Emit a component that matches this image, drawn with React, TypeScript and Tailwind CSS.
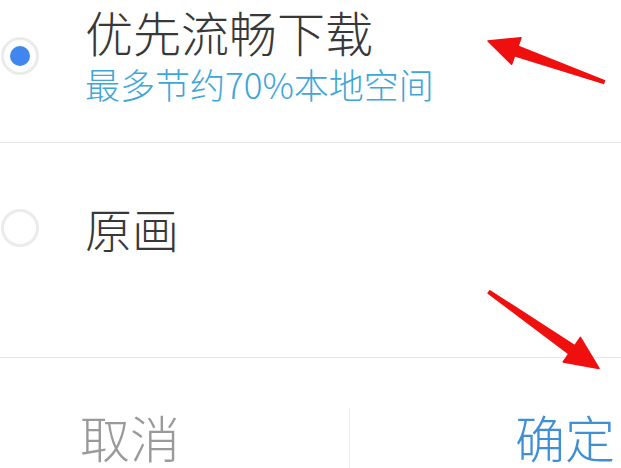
import React from 'react';

const font = { fontFamily: '"Noto Sans CJK SC", "Noto Sans", sans-serif' };

function Radio({ checked }: { checked?: boolean }) {
  return (
    <div className="w-[38px] h-[38px] shrink-0 rounded-full border-[3px] border-[#ebebeb] flex items-center justify-center">
      {checked && <div className="w-[20px] h-[20px] rounded-full bg-[#3f86ef]" />}
    </div>
  );
}

function Arrows() {
  return (
    <svg className="absolute inset-0 pointer-events-none" width="621" height="468" viewBox="0 0 621 468">
      <polygon
        points="488,41 521,37.8 518,46.3 604.5,80.6 603.5,83.4 514.6,55.7 511.6,64.2"
        fill="#f00f0f"
        stroke="#f00f0f"
        strokeWidth="1.5"
        strokeLinejoin="round"
      />
      <polygon
        points="599,368.5 580.4,337.4 574.7,345.6 489.9,290.8 488.1,293.2 568.9,353.8 563.2,362"
        fill="#f00f0f"
        stroke="#f00f0f"
        strokeWidth="1.5"
        strokeLinejoin="round"
      />
    </svg>
  );
}

export default function App() {
  return (
    <div className="relative w-[621px] h-[468px] overflow-hidden bg-white" style={font}>
      {/* option 1 */}
      <div className="flex h-[143px] border-b border-[#e6e6e6]">
        <div className="ml-[1px] mt-[37px]">
          <Radio checked />
        </div>
        <div className="ml-[46px] pt-[3px]">
          <div className="text-[48px] leading-[56px] font-light text-[#383838] whitespace-nowrap">优先流畅下载</div>
          <div className="mt-[3px] text-[35px] leading-[43px] font-light text-[#3fa6d8] whitespace-nowrap">最多节约70%本地空间</div>
        </div>
      </div>

      {/* option 2 */}
      <div className="flex items-start h-[215px] pt-[66px] border-b border-[#e6e6e6]">
        <div className="ml-[1px]">
          <Radio />
        </div>
        <div className="ml-[46px] -mt-[9px] text-[47px] leading-[55px] font-light text-[#383838]">原画</div>
      </div>

      {/* buttons */}
      <div className="flex h-[110px]">
        <div className="w-[349px] pl-[80px] pt-[49px] text-[50px] leading-[58px] font-light text-[#9a9a9a] whitespace-nowrap">取消</div>
        <div className="w-px h-[60px] mt-[50px] bg-[#efefef]" />
        <div className="pl-[165px] pt-[49px] text-[50px] leading-[58px] font-light text-[#3f8fd6] whitespace-nowrap">确定</div>
      </div>

      <Arrows />
    </div>
  );
}
